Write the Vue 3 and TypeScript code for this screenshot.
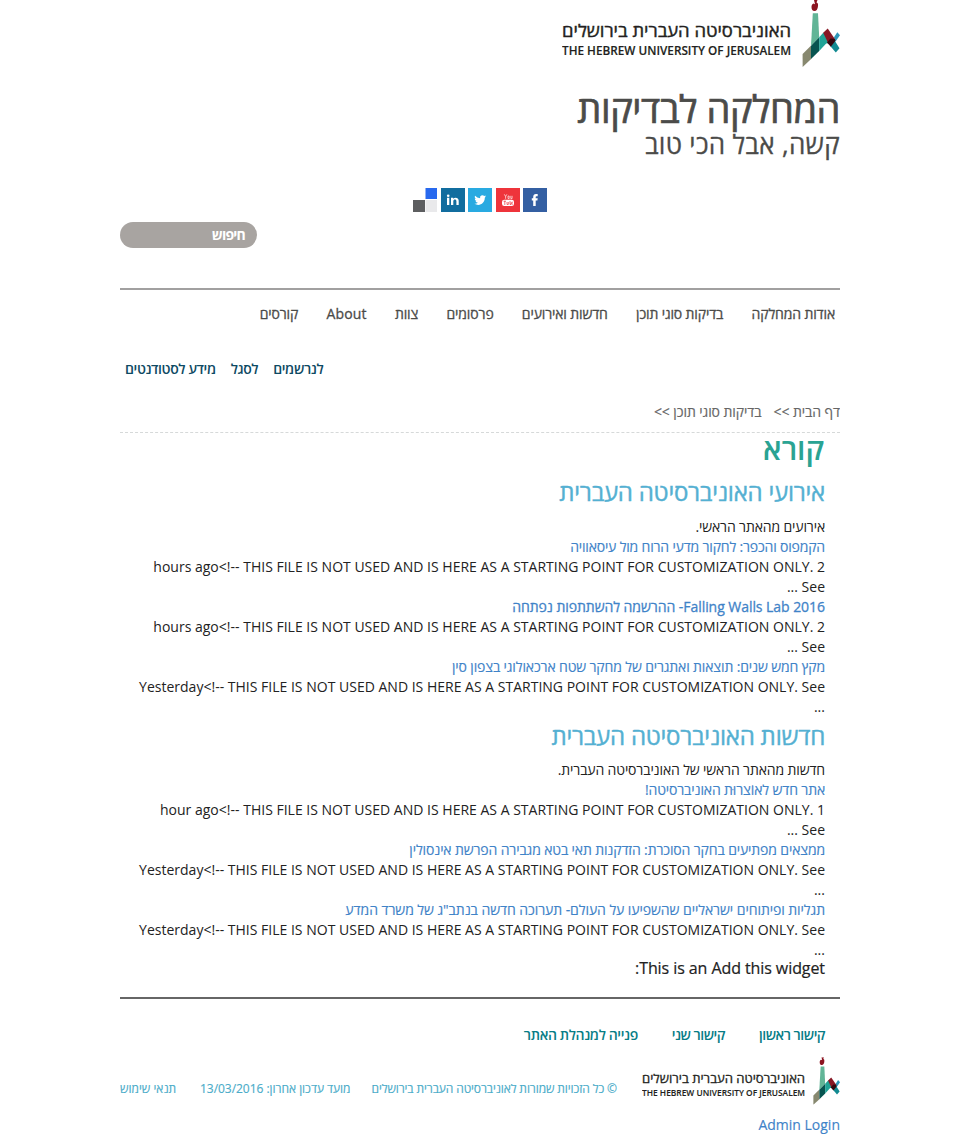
<script setup lang="ts">
interface Link { id: string; text: string }
interface Item { title: string; body: string; cls: string }
interface Section { id: string; heading: string; intro: string; items: Item[] }

const mainNav: Link[] = [
  { id: 'm1', text: 'אודות המחלקה' },
  { id: 'm2', text: 'בדיקות סוגי תוכן' },
  { id: 'm3', text: 'חדשות ואירועים' },
  { id: 'm4', text: 'פרסומים' },
  { id: 'm5', text: 'צוות' },
  { id: 'm6', text: 'About' },
  { id: 'm7', text: 'קורסים' },
]
const subNav: Link[] = [
  { id: 's1', text: 'לנרשמים' },
  { id: 's2', text: 'לסגל' },
  { id: 's3', text: 'מידע לסטודנטים' },
]
const footerNav: Link[] = [
  { id: 'f1', text: 'קישור ראשון' },
  { id: 'f2', text: 'קישור שני' },
  { id: 'f3', text: 'פנייה למנהלת האתר' },
]
const notice = '<!-- THIS FILE IS NOT USED AND IS HERE AS A STARTING POINT FOR CUSTOMIZATION ONLY. See ...'
const sections: Section[] = [
  {
    id: 'events',
    heading: 'אירועי האוניברסיטה העברית',
    intro: 'אירועים מהאתר הראשי.',
    items: [
      { cls: 't1', title: 'הקמפוס והכפר: לחקור מדעי הרוח מול עיסאוויה', body: '2 hours ago' + notice },
      { cls: 't2', title: 'Falling Walls Lab 2016- ההרשמה להשתתפות נפתחה', body: '2 hours ago' + notice },
      { cls: 't3', title: 'מקץ חמש שנים: תוצאות ואתגרים של מחקר שטח ארכאולוגי בצפון סין', body: 'Yesterday' + notice },
    ],
  },
  {
    id: 'news',
    heading: 'חדשות האוניברסיטה העברית',
    intro: 'חדשות מהאתר הראשי של האוניברסיטה העברית.',
    items: [
      { cls: 't4', title: 'אתר חדש לאוֹצרוּת האוניברסיטה!', body: '1 hour ago' + notice },
      { cls: 't5', title: 'ממצאים מפתיעים בחקר הסוכרת: הזדקנות תאי בטא מגבירה הפרשת אינסולין', body: 'Yesterday' + notice },
      { cls: 't6', title: 'תגליות ופיתוחים ישראליים שהשפיעו על העולם- תערוכה חדשה בנתב"ג של משרד המדע', body: 'Yesterday' + notice },
    ],
  },
]
</script>

<template>
  <div class="page" dir="rtl">
    <header>
      <svg class="logo" viewBox="0 0 278 67">
        <symbol id="uni-logo" viewBox="0 0 278 67">
          <text class="logo-he" x="229" y="37" textLength="229" lengthAdjust="spacingAndGlyphs">האוניברסיטה העברית בירושלים</text>
          <text class="logo-en" x="0" y="55" textLength="229" lengthAdjust="spacingAndGlyphs">THE HEBREW UNIVERSITY OF JERUSALEM</text>
          <path fill="#8c1420" d="M252 0h3.500l-1 2.500c1.500.5 1.700 1.500 1.500 3.500-.2 3-1.500 5-3.500 5s-3-1.500-3-4c0-2 .8-3 2-3.500l1.500.8z" />
          <path fill="#62b597" d="M250.800 13.300h5.200l1.200 24-8.200 8.500z" />
          <path fill="#87886f" d="M240.600 54l8.500-8.500V59l-8.500 8z" />
          <path fill="#075450" d="M249 45.700l8.200-8.400V51L249 59z" />
          <path fill="#20a396" d="M257.200 37.300l4.300-4.900 7.500 10.600-4.800.4-7 7.600z" />
          <path fill="#2e96b8" d="M272 37.200l3.300-5 2.700 3-4.600 6.600z" />
          <path fill="#128a91" d="M267.800 45.500l4.200-6 5.500 8.700-3.700 4.200z" />
          <path fill="#871724" d="M261.200 32.700l4.500-4.100 7 10.100-3 3.500-3.600.8z" />
          <path fill="#35080f" d="M265 42.500l3.500-4 4.300.2.700 2-4.700 6z" />
        </symbol>
        <use href="#uni-logo" />
      </svg>
      <h1>המחלקה לבדיקות</h1>
      <p class="slogan">קשה, אבל הכי טוב</p>
    </header>

    <div class="social">
      <svg viewBox="0 0 24 24"><path fill="#345fa2" d="M0 0h24v24H0z" /><path fill="#fff" d="M10.200 18v-5.500H8.800v-2.300h1.400V8.900c0-1.900 1-2.900 2.700-2.900h1.800v2.300h-1.200c-.6 0-.8.300-.8.800v1.100h2l-.3 2.300h-1.700V18z" /></svg>
      <svg viewBox="0 0 24 24"><path fill="#ee343b" d="M0 0h24v24H0z" /><rect x="6" y="11.800" width="12" height="6.200" rx="2.200" fill="#fff" /><path d="M8.300 6.300l1.300 2.200 1.300-2.200M9.600 8.500v2.300M12 8v2.500h1.200V8zM14.800 7.800v2.700h1.300V7.800" fill="none" stroke="#fff" stroke-opacity=".8" stroke-width=".8" /><path d="M7.500 13.200h2.500M8.800 13v4M11 14v2.500h1.300V14M14 13v3.500h1v-2M16.800 14.200h-1v2h1" fill="none" stroke="#ee343b" stroke-width=".7" /></svg>
      <svg viewBox="0 0 24 24"><path fill="#29aae1" d="M0 0h24v24H0z" /><path fill="#fff" d="M18 8.300a5 5 0 0 1-1.300.4c.5-.3.8-.7 1-1.200-.5.300-1 .500-1.500.600a2.400 2.400 0 0 0-4.100 2.200 6.800 6.800 0 0 1-5-2.500c-.6 1.100-.3 2.500.8 3.200l-1.100-.3c0 1.200.8 2.100 1.900 2.400h-1.100c.3 1 1.200 1.600 2.300 1.700a5 5 0 0 1-3.500 1c5.100 3 10.500-.5 10.400-6z" /></svg>
      <svg viewBox="0 0 24 24"><path fill="#116d9f" d="M0 0h24v24H0z" /><path fill="#fff" d="M6 9.800h2.300V17H6zM10 9.800h2.200v1c1.500-2 5.500-1.500 5.500 2V17h-2.300v-3.800c0-2.500-3.100-2.200-3.100 0V17H10z" /><circle cx="7.200" cy="7.700" r="1.300" fill="#fff" /></svg>
      <svg viewBox="0 0 24 24"><path fill="#2869ee" d="M12.500 0H24v11H12.500z" /><path fill="#5d5e60" d="M0 12h12v12H0z" /><path fill="#e9e9eb" d="M12.500 12H24v12H12.500z" /></svg>
    </div>

    <div class="search"><span>חיפוש</span></div>

    <nav class="main-nav"><a v-for="l in mainNav" :key="l.id" :class="l.id">{{ l.text }}</a></nav>
    <nav class="sub-nav"><a v-for="l in subNav" :key="l.id" :class="l.id">{{ l.text }}</a></nav>

    <div class="crumbs"><span>דף הבית &gt;&gt;</span><span>בדיקות סוגי תוכן &gt;&gt;</span></div>

    <main>
      <h2>קורא</h2>
      <section v-for="s in sections" :key="s.id" :class="s.id">
        <h3><span>{{ s.heading }}</span></h3>
        <p class="intro">{{ s.intro }}</p>
        <article v-for="i in s.items" :key="i.cls">
          <a :class="i.cls">{{ i.title }}</a>
          <p>{{ i.body }}</p>
        </article>
      </section>
      <p class="widget">This is an Add this widget:</p>
    </main>

    <footer>
      <nav class="footer-nav"><a v-for="l in footerNav" :key="l.id" :class="l.id">{{ l.text }}</a></nav>
      <div class="legal">
        <svg class="logo-small" viewBox="0 0 278 67"><use href="#uni-logo" /></svg>
        <span class="copy">© כל הזכויות שמורות לאוניברסיטה העברית בירושלים</span>
        <span class="updated">מועד עדכון אחרון: 13/03/2016</span>
        <span class="terms">תנאי שימוש</span>
      </div>
      <a class="admin">Admin Login</a>
    </footer>
  </div>
</template>

<style>
body { margin: 0; background: #fff; overflow: hidden; }
</style>

<style scoped>
.page { width: 720px; height: 1135px; margin: 0 auto; overflow: hidden; font: 14px/20px "Open Sans", "DejaVu Sans", sans-serif; color: #222; white-space: nowrap; }
h1, h2, h3, p { margin: 0; font-weight: 400; }
header { height: 188px; }
.logo { display: block; width: 278px; height: 67px; direction: ltr; }
.logo-he { direction: rtl; font: 400 17px "Open Sans", sans-serif; fill: #231f20; stroke: #231f20; stroke-width: .4px; }
.logo-en { direction: ltr; font: 600 12px "Open Sans", sans-serif; fill: #231f20; stroke: #231f20; stroke-width: .15px; }
h1 { margin-top: 20px; height: 43px; font-size: 38px; line-height: 42px; letter-spacing: -.45px; color: #4b4b49; -webkit-text-stroke: .7px #4b4b49; }
.slogan { height: 30px; font-size: 26px; line-height: 28px; color: #4b4b49; letter-spacing: .3px; -webkit-text-stroke: .3px #4b4b49; }
.social { display: flex; justify-content: center; gap: 3.500px; height: 24px; }
.social svg { width: 24px; height: 24px; }
.search { box-sizing: border-box; width: 137px; height: 26px; margin: 10px auto 0 0; padding-right: 12px; border-radius: 13px; background: #a8a4a1; color: #fff; font-weight: 700; line-height: 26px; letter-spacing: -.8px; }
.main-nav { display: flex; gap: 28.300px; height: 58px; margin-top: 40px; padding: 14px 5px 0; box-sizing: border-box; border-top: 2px solid #a1a0a0; color: #4b4b49; letter-spacing: -.14px; -webkit-text-stroke: .3px #4b4b49; }
.m6 { letter-spacing: .15px; }
.sub-nav { display: flex; justify-content: flex-end; gap: 15px; height: 43px; margin-top: 13px; padding-left: 5px; color: #0e4a63; font-weight: 600; letter-spacing: -.38px; }
.crumbs { display: flex; gap: 12px; box-sizing: border-box; height: 31px; color: #666; border-bottom: 1px dashed #d6d9d9; letter-spacing: -.08px; -webkit-text-stroke: .15px #666; }
main { padding: 0 15px; height: 564px; }
h2 { height: 36px; padding-right: 1px; font-size: 30px; line-height: 32px; font-weight: 600; color: #2aa393; }
h3 { height: 48px; font-size: 24px; line-height: 46px; letter-spacing: -.22px; color: #54b0d2; -webkit-text-stroke: .4px #54b0d2; }
.news h3 { height: 43px; line-height: 37px; }
.intro { letter-spacing: -.14px; }
article a { display: block; height: 20px; color: #3f83c8; -webkit-text-stroke: .15px #3f83c8; }
.t1 { letter-spacing: -.18px; }
.t2 { letter-spacing: -.05px; -webkit-text-stroke-width: .3px; }
.t3 { letter-spacing: -.14px; }
.t4, .t5 { letter-spacing: -.135px; }
.t6 { letter-spacing: -.07px; }
article p { white-space: normal; height: 40px; letter-spacing: .005px; }
.widget { font-size: 16px; line-height: 16px; letter-spacing: -.08px; -webkit-text-stroke: .2px #222; }
footer { border-top: 2px solid #666; color: #4bacc9; }
.footer-nav { display: flex; gap: 34px; height: 58px; padding: 26px 15px 0; box-sizing: border-box; color: #087d86; font-weight: 600; letter-spacing: -.5px; }
.f3 { letter-spacing: -.38px; }
.legal { display: flex; align-items: flex-start; height: 58px; font-size: 12px; -webkit-text-stroke: .15px #4bacc9; }
.logo-small { width: 198px; height: 48px; direction: ltr; margin-left: 25px; -webkit-text-stroke: 0; }
.legal span { margin-top: 22px; }
.copy { letter-spacing: -.11px; }
.updated { margin-right: 21px; letter-spacing: -.03px; }
.terms { margin-right: auto; }
.admin { display: block; color: #3f83c8; -webkit-text-stroke: .15px #3f83c8; }
</style>
